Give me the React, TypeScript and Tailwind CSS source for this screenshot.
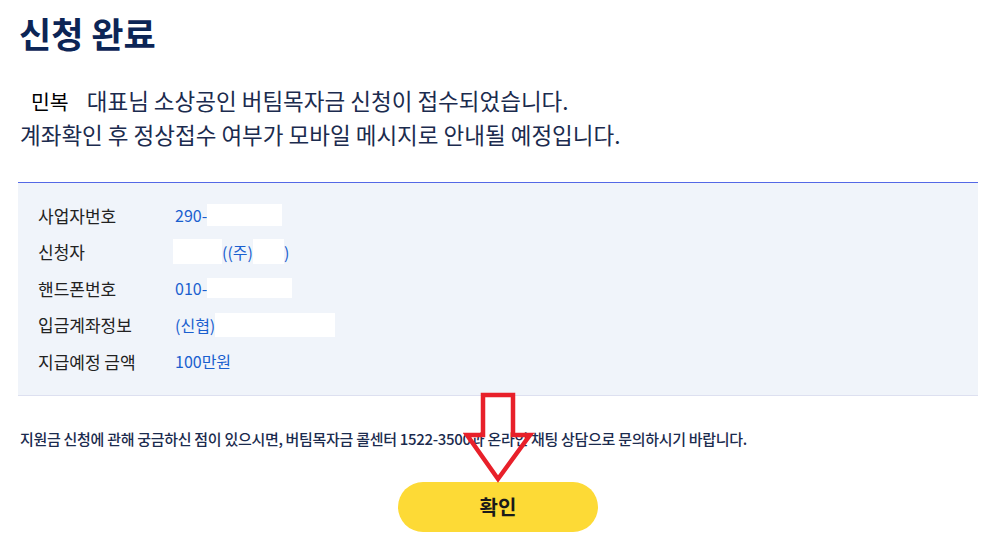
import React from 'react'

const rows = [
  { label: '사업자번호' },
  { label: '신청자' },
  { label: '핸드폰번호' },
  { label: '입금계좌정보' },
  { label: '지급예정 금액' },
]

function Mask({ w, h = 22 }: { w: number; h?: number }) {
  return <span className="inline-block bg-white align-middle" style={{ width: w, height: h }} />
}

function Value({ i }: { i: number }) {
  if (i === 0)
    return (
      <span className="flex items-center">
        290-<Mask w={75} />
      </span>
    )
  if (i === 1)
    return (
      <span className="flex items-center -ml-[2px]">
        <Mask w={49} h={25} />
        ((주)
        <Mask w={31} h={25} />)
      </span>
    )
  if (i === 2)
    return (
      <span className="flex items-center">
        010-<Mask w={85} h={20} />
      </span>
    )
  if (i === 3)
    return (
      <span className="flex items-center">
        (신협)<Mask w={120} h={24} />
      </span>
    )
  return <span>100만원</span>
}

export default function App() {
  return (
    <div
      className="relative w-[1004px] h-[555px] bg-white px-[18px] pt-[10px]"
      style={{ fontFamily: '"Noto Sans CJK KR", "Noto Sans", sans-serif' }}
    >
      <h1 className="text-[35px] font-bold text-[#0c2556] leading-[46px] pl-[1px]">신청 완료</h1>

      <div className="mt-[28px] pl-[2px] text-[22.5px] leading-[33px] text-[#1b2b4e]">
        <p>
          <span className="pl-[11px] pr-[18px] text-[20.5px] text-black">민복</span>
          대표님 소상공인 버팀목자금 신청이 접수되었습니다.
        </p>
        <p>계좌확인 후 정상접수 여부가 모바일 메시지로 안내될 예정입니다.</p>
      </div>

      <div className="mt-[31px] w-[960px] h-[214px] border-t border-b border-t-[#5468e6] border-b-[#dde0f0] bg-[#f0f4fa] pl-[20px] pt-[14px]">
        {rows.map((r, i) => (
          <div key={r.label} className="flex items-center h-[36.5px] text-[17px]">
            <span className="w-[137px] text-[#222222]">{r.label}</span>
            <span className="text-[#1a5fcf] text-[16px]">
              <Value i={i} />
            </span>
          </div>
        ))}
      </div>

      <p className="mt-[32px] pl-[2px] text-[15px] font-medium text-[#1b2b4e] tracking-[-0.3px]">
        지원금 신청에 관해 궁금하신 점이 있으시면, 버팀목자금 콜센터 1522-3500과 온라인 채팅 상담으로 문의하시기 바랍니다.
      </p>

      <div className="flex justify-center mt-[31px] pr-[8px]">
        <button className="w-[200px] h-[50px] rounded-full bg-[#fdda36] text-[20px] font-bold text-[#1a1a1a]">
          확인
        </button>
      </div>

      <svg className="absolute left-[463px] top-[391px]" width="72" height="94" viewBox="0 0 72 94">
        <polygon
          points="20,4 50,4 50,44 67,44 35,88 4,44 20,44"
          fill="none"
          stroke="#e8202a"
          strokeWidth="4.5"
          strokeLinejoin="miter"
        />
      </svg>
    </div>
  )
}
